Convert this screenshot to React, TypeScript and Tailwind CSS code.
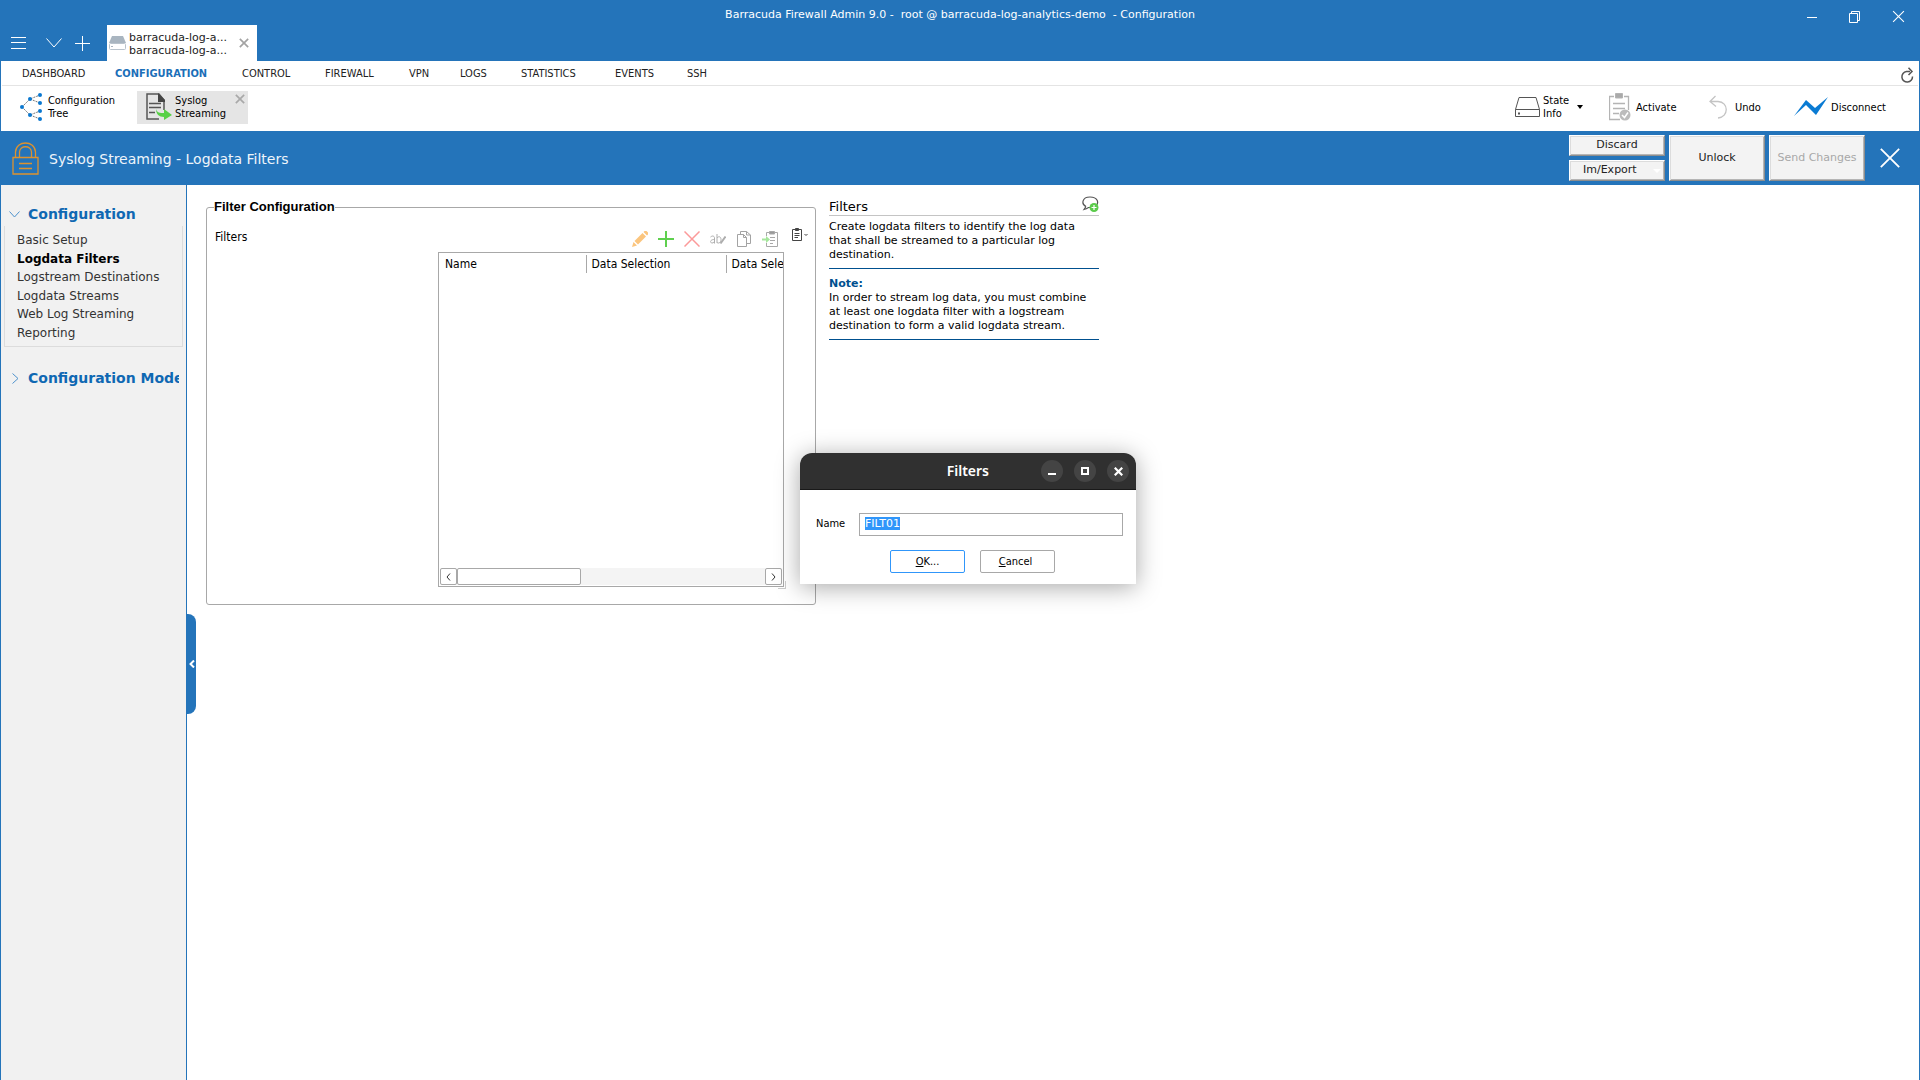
import type { ReactNode } from "react";

const menu = [
  { label: "DASHBOARD", width: "w-[93px]" },
  { label: "CONFIGURATION", width: "w-[127px]", active: true },
  { label: "CONTROL", width: "w-[83px]" },
  { label: "FIREWALL", width: "w-[84px]" },
  { label: "VPN", width: "w-[51px]" },
  { label: "LOGS", width: "w-[61px]" },
  { label: "STATISTICS", width: "w-[94px]" },
  { label: "EVENTS", width: "w-[72px]" },
  { label: "SSH", width: "w-[40px]" },
];

const sections = [
  "Basic Setup",
  "Logdata Filters",
  "Logstream Destinations",
  "Logdata Streams",
  "Web Log Streaming",
  "Reporting",
];

function Cross({ className }: { className: string }) {
  return (
    <svg viewBox="0 0 12 12" fill="none" stroke="currentColor" className={className}>
      <path d="M1 1 11 11M11 1 1 11" />
    </svg>
  );
}

function IconButton({ label, children, className = "" }: { label: string; children: ReactNode; className?: string }) {
  return (
    <button type="button" aria-label={label} className={`flex shrink-0 items-center justify-center ${className}`}>
      {children}
    </button>
  );
}

function TitleBar() {
  return (
    <header className="relative flex h-[61px] items-end bg-[#2474ba] text-white">
      <div className="flex h-9 items-center pb-1 pl-[11px]">
        <IconButton label="Menu" className="mt-1">
          <svg width="15" height="12" stroke="currentColor">
            <path d="M0 .5H15M0 5.500H15M0 11.500H15" />
          </svg>
        </IconButton>
        <IconButton label="Sessions" className="mt-1 ml-5">
          <svg width="16" height="10" fill="none" stroke="currentColor">
            <path d="M.5.5 8 9 15.500.5" />
          </svg>
        </IconButton>
        <IconButton label="New session" className="mt-1 ml-[13px]">
          <svg width="15" height="15" stroke="currentColor">
            <path d="M0 7.500H15M7.500 0V15" />
          </svg>
        </IconButton>
      </div>
      <div className="ml-[17px] flex h-9 w-[150px] items-center bg-white pl-0.5 text-[11px] leading-[13px] text-[#222]">
        <svg width="17" height="14" className="shrink-0">
          <path d="M3 0H14L17 7H0Z" fill="#a9b5c0" />
          <rect x=".5" y="7.500" width="16" height="6" rx="1" fill="#fff" stroke="#b9c3cc" />
          <path d="M2 10.500H4" stroke="#a9b5c0" />
        </svg>
        <div className="ml-[3px] flex-1 pt-0.5 whitespace-nowrap">
          <p>barracuda-log-a...</p>
          <p>barracuda-log-a...</p>
        </div>
        <IconButton label="Close tab" className="mr-2 text-[#a3a3a3]">
          <Cross className="size-[10px] stroke-2" />
        </IconButton>
      </div>
      <h1 className="absolute inset-x-0 top-2 text-center text-[11px] leading-[14px] whitespace-pre">
        {"Barracuda Firewall Admin 9.0 -  root @ barracuda-log-analytics-demo  - Configuration"}
      </h1>
      <div className="absolute top-[10px] right-[15px] flex items-center gap-8">
        <IconButton label="Minimize">
          <svg width="10" height="12" stroke="currentColor">
            <path d="M0 6.500H10" />
          </svg>
        </IconButton>
        <IconButton label="Restore">
          <svg width="11" height="12" fill="none" stroke="currentColor">
            <path d="M.5 2.500H8.500V11.500H.5ZM2.500 2.500V.5H10.500V9.500H8.500" />
          </svg>
        </IconButton>
        <IconButton label="Close">
          <Cross className="size-[13px]" />
        </IconButton>
      </div>
    </header>
  );
}

function MenuBar() {
  return (
    <nav className="mx-px flex h-[25px] items-center border-b border-[#e4e4e4] pt-[3px] pl-5 font-['DejaVu_Sans_Condensed','Liberation_Sans',sans-serif] text-[11px] text-[#222]">
      {menu.map((item) => (
        <a
          key={item.label}
          href="#"
          className={`${item.width} ${item.active ? "font-bold text-[#1b6fb8]" : ""}`}
        >
          {item.label}
        </a>
      ))}
      <IconButton label="Refresh" className="mr-1 ml-auto text-[#555]">
        <svg width="14" height="16" fill="none" stroke="currentColor" strokeWidth="1.500">
          <path d="M10 4.500H6.500A5.300 5.300 0 1 0 12.500 9.500M8.500.8 12 4.500 8.500 8" />
        </svg>
      </IconButton>
    </nav>
  );
}

function TreeIcon() {
  return (
    <svg width="22" height="28" fill="none">
      <g stroke="#777" strokeDasharray="2 1">
        <path d="M2 14 10 6 20 2M10 6 20 10M2 14 10 22 20 18M10 22 20 26" />
      </g>
      <g fill="#0a78d0">
        <circle cx="2" cy="14" r="2" />
        <circle cx="10" cy="6" r="2" />
        <circle cx="10" cy="22" r="2" />
        <circle cx="20" cy="2" r="2" />
        <circle cx="20" cy="10" r="2" />
        <circle cx="20" cy="18" r="2" />
        <circle cx="20" cy="26" r="2" />
      </g>
    </svg>
  );
}

function StreamingIcon() {
  return (
    <svg width="26" height="28" fill="none">
      <path d="M18 17V7L13 1H1V26H13" stroke="#555" strokeWidth="1.500" />
      <path d="M12 0 19 7V9H12Z" fill="#444" />
      <path d="M3 10.500H15M3 14.500H15M3 19.500H9" stroke="#555" strokeWidth="1.500" />
      <path d="M10 16C11 20 14 20 18 20V16L26 22 18 27V24C13 24 10 21 10 16Z" fill="#58d147" />
    </svg>
  );
}

function ToolBar() {
  return (
    <div className="flex h-[45px] items-center pb-[3px] pl-[19px] font-['DejaVu_Sans_Condensed','Liberation_Sans',sans-serif] text-[11px] leading-[13px] text-black">
      <button type="button" className="flex w-[95px] items-center gap-1.5 text-left">
        <TreeIcon />
        <span>
          Configuration
          <br />
          Tree
        </span>
      </button>
      <div className="ml-[22px] flex h-[33px] w-[111px] items-start bg-[#e5e5e5] pl-[9px]">
        <button type="button" className="flex h-full flex-1 items-center gap-[3px] text-left">
          <StreamingIcon />
          <span>
            Syslog
            <br />
            Streaming
          </span>
        </button>
        <IconButton label="Close Syslog Streaming" className="mt-[3px] mr-[3px] text-[#a9a9a9]">
          <Cross className="size-[10px] stroke-2" />
        </IconButton>
      </div>
      <div className="ml-auto flex items-center pr-[33px]">
        <button type="button" className="flex w-[94px] items-center text-left">
          <svg width="25" height="20" fill="none" stroke="#555">
            <path d="M.5 12.500 4 .5H21L24.500 12.500V19.500H.5ZM.5 12.500H24.500" />
            <path d="M3 16.500H5" strokeWidth="2" />
          </svg>
          <span className="ml-[3px]">
            State
            <br />
            Info
          </span>
          <svg width="6" height="4" className="ml-2">
            <path d="M0 0H6L3 4Z" />
          </svg>
        </button>
        <button type="button" className="flex w-[100px] items-center gap-[5px]">
          <svg width="22" height="28" fill="none" stroke="#b4b4b4">
            <path d="M5 3.500H.5V26.500H11M15 3.500H19.500V17" strokeWidth="1.300" />
            <path d="M6.500.5H13.500V5H6.500Z" fill="#aaa" />
            <path d="M4 10.500H16M4 15.500H16M4 20.500H10" strokeWidth="1.500" />
            <circle cx="16" cy="22" r="5.500" fill="#bcbcbc" stroke="none" />
            <path d="m13 22 2.500 2.500L19 19.500" stroke="#fff" strokeWidth="1.500" />
          </svg>
          Activate
        </button>
        <button type="button" className="flex w-[85px] items-center gap-2">
          <svg width="18" height="24" fill="none" stroke="#c4c4c4" strokeWidth="1.300">
            <path d="M6.500 1 1 6.500 7 11.500M1 6.500H9C20 7 20 22 9 23" />
          </svg>
          Undo
        </button>
        <button type="button" className="flex items-center gap-[3px]">
          <svg width="34" height="20">
            <path d="M0 19 12 3 21 11 34 0 22 18 12 8Z" fill="#0a7bd3" />
          </svg>
          Disconnect
        </button>
      </div>
    </div>
  );
}

const raised =
  "border border-t-white border-l-white border-r-[#8d8d8d] border-b-[#8d8d8d] bg-[#f3f3f3] shadow-[inset_1px_1px_0_#dcdcdc,inset_-1px_-1px_0_#b5b5b5]";

function PageHeader() {
  return (
    <div className="flex h-[54px] items-center bg-[#2474ba] pr-[18px] pl-[11px]">
      <svg width="27" height="33" fill="none" stroke="#dd922f" className="shrink-0">
        <path d="M1 15.500H26V32H1ZM3.500 15V10C4-2 23-2 23.500 10V15M7.500 15V10C8 3 19 3 19.500 10V15" strokeWidth="1.300" />
        <path d="M7 21.500H20M7 26.500H20" strokeWidth="1.500" />
      </svg>
      <h2 className="ml-[10px] pt-0.5 text-[14px] text-[#eef5fb]">Syslog Streaming - Logdata Filters</h2>
      <div className="ml-auto flex h-[46px] items-stretch gap-1 text-[11px] text-[#222]">
        <div className="flex w-24 flex-col justify-between">
          <button type="button" className={`h-[21px] ${raised}`}>
            Discard
          </button>
          <button type="button" className={`flex h-[21px] items-center justify-between pr-[3px] pl-[13px] ${raised}`}>
            Im/Export
            <svg width="8" height="4">
              <path d="M0 0H8L4 4Z" fill="#fff" />
            </svg>
          </button>
        </div>
        <button type="button" className={`w-24 ${raised}`}>
          Unlock
        </button>
        <button type="button" disabled className={`w-24 text-[#a8a8a8] ${raised}`}>
          Send Changes
        </button>
      </div>
      <IconButton label="Close page" className="ml-[14px] text-white">
        <Cross className="size-[22px]" />
      </IconButton>
    </div>
  );
}

function Sidebar() {
  return (
    <aside className="w-[186px] shrink-0 border-r border-[#2474ba] bg-[#f1f1f1] pt-5 pr-[3px] pl-[3px]">
      <button type="button" className="flex items-center text-[14px] leading-[18px] font-bold text-[#0f68b3]">
        <svg width="11" height="7" fill="none" stroke="#4e92cc" className="mr-[8px] ml-[5px]">
          <path d="M.5.5 5.500 6 10.500.5" />
        </svg>
        Configuration
      </button>
      <ul className="mt-[3px] grid h-[121px] auto-rows-fr border border-t-0 border-[#dcdcdc] pt-[5px] pb-1 pl-3 text-[12px] leading-[18px] text-[#333]">
        {sections.map((name) => (
          <li key={name} className="flex items-center">
            <a href="#" className={name === "Logdata Filters" ? "font-bold text-black" : ""}>
              {name}
            </a>
          </li>
        ))}
      </ul>
      <button
        type="button"
        className="mt-[22px] flex w-[175px] items-center overflow-hidden text-[14px] leading-[18px] font-bold whitespace-nowrap text-[#0f68b3]"
      >
        <svg width="7" height="11" fill="none" stroke="#4e92cc" className="mr-[9px] ml-2 shrink-0">
          <path d="M.5.5 6 5.500.5 10.500" />
        </svg>
        Configuration Mode
      </button>
    </aside>
  );
}

function FilterTools() {
  return (
    <div className="flex items-center gap-[10px]">
      <IconButton label="Edit">
        <svg width="16" height="16" fill="#fbc57e">
          <path d="M0 16 1.500 11 5 14.500ZM2.500 10 10.500 2 14 5.500 6 13.500ZM11.500 1 12.500 0H14.500L16 1.500V3.500L15 4.500Z" />
        </svg>
      </IconButton>
      <IconButton label="Add">
        <svg width="16" height="16" stroke="#5fd04e" strokeWidth="2">
          <path d="M0 8H16M8 0V16" />
        </svg>
      </IconButton>
      <IconButton label="Delete">
        <svg width="16" height="16" stroke="#fb9a9a" strokeWidth="1.500">
          <path d="M.5.5 15.500 15.500M15.500.5.5 15.500" />
        </svg>
      </IconButton>
      <IconButton label="Rename">
        <svg width="16" height="16" fill="none" stroke="#adadad">
          <path d="M.5 6C3 4 4.500 5.500 4.500 7V12.500M4.500 8.500C-.5 8.500 0 12 2 12 3.500 12 4.500 11 4.500 10M7 3V12M7 7C9 4.500 11 6 11 8.500S9 13 7 11.500" />
          <path d="m10.500 12.500 5-7" strokeWidth="2" />
        </svg>
      </IconButton>
      <IconButton label="Copy">
        <svg width="16" height="16" fill="none" stroke="#a3a3a3">
          <path d="M1.500 3.500H7.500L10.500 6.500V15.500H1.500ZM7.500 3.500V6.500H10.500M4.500 3.500V.5H10.500L14.500 4V12.500H10.500M10.500.5V4H14.500" />
        </svg>
      </IconButton>
      <IconButton label="Paste">
        <svg width="16" height="16" fill="none" stroke="#a8a8a8">
          <path d="M4.500 5V1.500H7M12 1.500H15.500V15.500H4.500V12M8 6.500H13M8 9.500H13M8 12.500H11" />
          <path d="M7.500.5H12.500V3H7.500Z" fill="#999" />
          <path d="M0 7.500H4V5L8 8.500 4 12V9.500H0Z" fill="#a5e69c" stroke="none" />
        </svg>
      </IconButton>
    </div>
  );
}

function FilterPanel() {
  return (
    <fieldset className="h-[406px] w-[610px] shrink-0 rounded-[3px] border border-[#a8a8a8] font-['DejaVu_Sans_Condensed','Liberation_Sans',sans-serif] text-[12px] text-black">
      <legend className="ml-[7px] font-['Liberation_Sans',Arial,sans-serif] text-[13px] leading-4 font-bold">
        Filter Configuration
      </legend>
      <div className="flex pt-[13px] pl-2">
        <p className="w-[223px] pt-px leading-4">Filters</p>
        <div className="w-[346px]">
          <div className="flex justify-end pt-[3px] pr-[6px] pb-[5px]">
            <FilterTools />
          </div>
          <div className="relative flex h-[335px] w-[346px] flex-col border border-[#a8a8a8]">
            <div className="flex-1 overflow-hidden pt-0.5">
              <table className="w-[440px] table-fixed text-left leading-[18px]">
                <thead>
                  <tr>
                    <th className="w-[147px] border-r border-[#a8a8a8] pl-1.5 font-normal">Name</th>
                    <th className="w-[140px] border-r border-[#a8a8a8] pl-[5px] font-normal">Data Selection</th>
                    <th className="pl-[5px] font-normal">Data Selector</th>
                  </tr>
                </thead>
              </table>
            </div>
            <div className="mx-px mb-px flex h-[17px] bg-[#f4f4f4] text-[#333]">
              <IconButton label="Scroll left" className="w-[17px] rounded-[2px] border border-[#a8a8a8] bg-white">
                <svg width="5" height="8" fill="none" stroke="currentColor">
                  <path d="M4 .5 1 4 4 7.500" />
                </svg>
              </IconButton>
              <div className="w-[124px] rounded-[2px] border border-[#a8a8a8] bg-white" />
              <IconButton label="Scroll right" className="ml-auto w-[17px] rounded-[2px] border border-[#a8a8a8] bg-white">
                <svg width="5" height="8" fill="none" stroke="currentColor">
                  <path d="M1 .5 4 4 1 7.500" />
                </svg>
              </IconButton>
            </div>
            <span className="absolute -right-[3px] -bottom-[3px] size-2 border-r border-b border-[#ccc]" />
          </div>
        </div>
        <IconButton label="Clipboard" className="ml-2 self-start">
          <svg width="17" height="14" fill="none" stroke="#444">
            <path d="M3 1.500H.5V12.500H9.500V1.500H7M2.500 5.500H7.500M2.500 7.500H7.500M2.500 9.500H6" />
            <path d="M3.500.5H6.500V2.500H3.500Z" fill="#444" />
            <path d="m12.500 6 1.500 1.500L15.500 6" />
          </svg>
        </IconButton>
      </div>
    </fieldset>
  );
}

function HelpPanel() {
  return (
    <section className="mt-3 w-[270px] shrink-0 text-[11px] leading-[14px] text-black">
      <div className="flex h-[19px] items-center justify-between border-b border-[#c4c4c4]">
        <h3 className="pt-0.5 text-[13px]">Filters</h3>
        <svg width="17" height="16" fill="none" className="mb-1">
          <path d="M4 10.500C-1 8 0 1 8 1S17 7 14 9.500M4 10.500 2 13.500C4 13 5 12.500 6.500 11.500H8" stroke="#555" strokeWidth="1.200" />
          <circle cx="12" cy="11.500" r="4.500" fill="#5bcb4b" />
          <path d="M9.500 11.500H14.500M12 9V14" stroke="#fff" strokeWidth="1.200" />
        </svg>
      </div>
      <p className="border-b border-[#00508f] pt-1 pb-[6px]">
        Create logdata filters to identify the log data
        <br />
        that shall be streamed to a particular log
        <br />
        destination.
      </p>
      <div className="border-b border-[#00508f] pt-2 pb-[6px]">
        <h4 className="font-bold text-[#00508f]">Note:</h4>
        <p>
          In order to stream log data, you must combine
          <br />
          at least one logdata filter with a logstream
          <br />
          destination to form a valid logdata stream.
        </p>
      </div>
    </section>
  );
}

const round = "size-[22px] rounded-full bg-[#444] text-white";

function FilterDialog() {
  return (
    <div
      role="dialog"
      aria-labelledby="dialog-title"
      className="absolute top-[453px] left-[800px] w-[336px] rounded-t-[12px] bg-white pb-[11px] font-['DejaVu_Sans_Condensed','Liberation_Sans',sans-serif] text-[11px] text-black shadow-[0_3px_24px_rgba(0,0,0,0.35)]"
    >
      <div className="flex h-[37px] items-center justify-end gap-[11px] rounded-t-[12px] border-b border-[#191919] bg-[#303030] pr-[7px]">
        <h2 id="dialog-title" className="mr-[41px] pb-px font-['Noto_Sans',sans-serif] text-[14px] font-semibold text-white">
          Filters
        </h2>
        <IconButton label="Minimize dialog" className={round}>
          <svg width="8" height="8" stroke="currentColor" strokeWidth="2">
            <path d="M0 7H8" />
          </svg>
        </IconButton>
        <IconButton label="Maximize dialog" className={round}>
          <svg width="8" height="8" fill="none" stroke="currentColor" strokeWidth="2">
            <path d="M1 1H7V7H1Z" />
          </svg>
        </IconButton>
        <IconButton label="Close dialog" className={round}>
          <Cross className="size-[9px] stroke-[3]" />
        </IconButton>
      </div>
      <div className="flex items-center pt-[23px] pr-[13px] pl-4">
        <label htmlFor="filter-name" className="w-[43px]">
          Name
        </label>
        <input
          id="filter-name"
          defaultValue="FILT01"
          ref={(el) => {
            el?.focus();
            el?.select();
          }}
          className="h-[23px] min-w-0 flex-1 border border-[#a8a8a8] px-[5px] pb-[3px] font-['DejaVu_Sans',Verdana,sans-serif] outline-none selection:bg-[#3096fa] selection:text-white"
        />
      </div>
      <div className="mt-[14px] flex justify-center gap-[15px] pl-[9px]">
        <button type="button" className="h-[23px] w-[75px] rounded-[2px] border border-[#3096fa] pt-0.5">
          <u>O</u>K...
        </button>
        <button type="button" className="h-[23px] w-[75px] rounded-[2px] border border-[#a8a8a8] pt-0.5 pr-1">
          <u>C</u>ancel
        </button>
      </div>
    </div>
  );
}

export default function App() {
  return (
    <div className="relative flex min-h-screen flex-col bg-white font-['DejaVu_Sans',Verdana,sans-serif]">
      <TitleBar />
      <div className="flex flex-1 flex-col border-x border-[#2474ba]">
        <MenuBar />
        <ToolBar />
        <PageHeader />
        <div className="flex flex-1">
          <Sidebar />
          <main className="relative flex flex-1 items-start gap-[13px] pl-[19px]">
            <button
              type="button"
              aria-label="Collapse navigation"
              className="absolute top-[429px] left-0 flex h-[100px] w-[9px] items-center justify-center rounded-r-[8px] bg-[#2474ba] text-white"
            >
              <svg width="6" height="8" fill="none" stroke="currentColor" strokeWidth="2">
                <path d="M5 .5 1.500 4 5 7.500" />
              </svg>
            </button>
            <div className="pt-[14px]">
              <FilterPanel />
            </div>
            <HelpPanel />
          </main>
        </div>
      </div>
      <FilterDialog />
    </div>
  );
}
